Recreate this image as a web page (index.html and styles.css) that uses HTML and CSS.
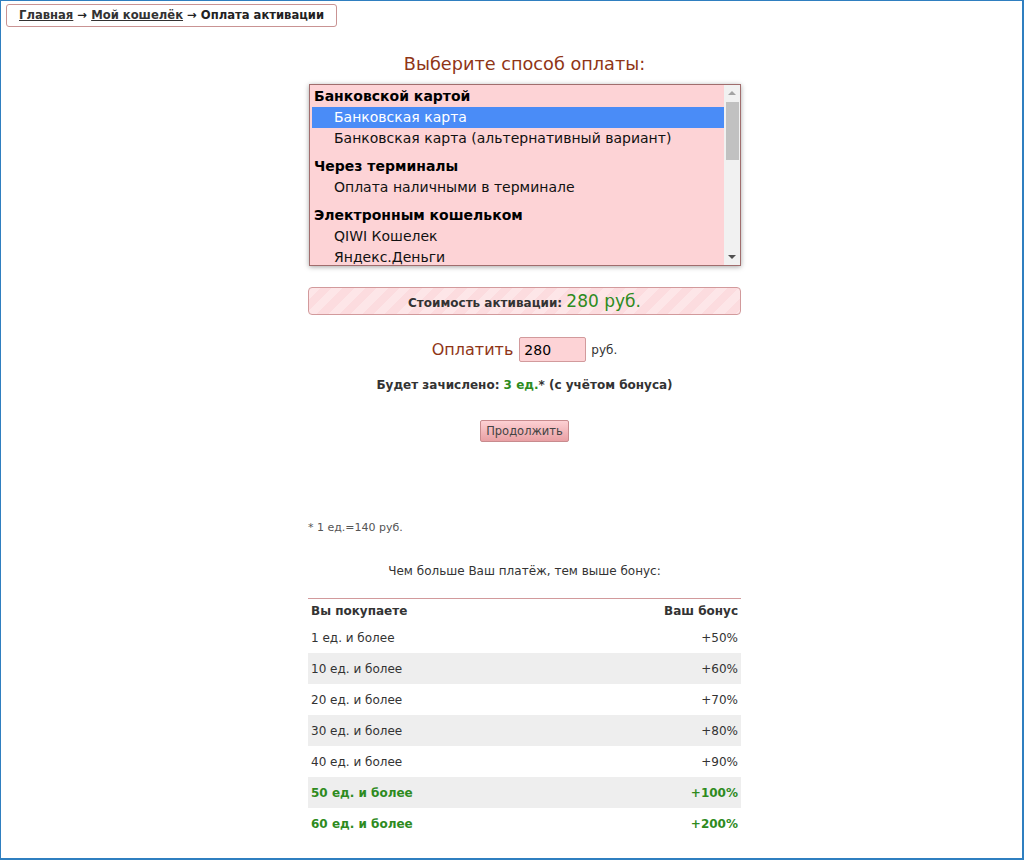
FILE: index.html
```html
<!DOCTYPE html>
<html lang="ru">
<head>
<meta charset="UTF-8">
<title>Оплата активации</title>
<link rel="stylesheet" href="styles.css">
</head>
<body>
<div class="frame">
    <div class="crumbs">
        <a href="#">Главная</a> &rarr; <a href="#">Мой кошелёк</a> &rarr; Оплата активации
    </div>

    <div class="main">
        <div class="column">
            <h2 class="title">Выберите способ оплаты:</h2>

            <div class="listbox">
                <div class="items">
                    <div class="group">Банковской картой</div>
                    <div class="option selected">Банковская карта</div>
                    <div class="option">Банковская карта (альтернативный вариант)</div>
                    <div class="group">Через терминалы</div>
                    <div class="option">Оплата наличными в терминале</div>
                    <div class="group">Электронным кошельком</div>
                    <div class="option">QIWI Кошелек</div>
                    <div class="option">Яндекс.Деньги</div>
                </div>
                <div class="scrollbar">
                    <div class="sb-btn"><span class="tri-up"></span></div>
                    <div class="sb-thumb"></div>
                    <div class="sb-track"></div>
                    <div class="sb-btn"><span class="tri-down"></span></div>
                </div>
            </div>

            <div class="price">
                Стоимость активации: <span class="price-value">280 руб.</span>
            </div>

            <div class="pay">
                <span class="pay-label">Оплатить</span>
                <input type="text" class="pay-input" value="280">
                <span class="pay-unit">руб.</span>
            </div>

            <div class="credit">Будет зачислено: <span class="green">3 ед.</span>* (с учётом бонуса)</div>

            <div class="actions">
                <button class="btn">Продолжить</button>
            </div>

            <div class="note">* 1 ед.=140 руб.</div>

            <div class="bonus-title">Чем больше Ваш платёж, тем выше бонус:</div>

            <table class="bonus">
                <thead>
                    <tr>
                        <th>Вы покупаете</th>
                        <th class="r">Ваш бонус</th>
                    </tr>
                </thead>
                <tbody>
                    <tr><td>1 ед. и более</td><td class="r">+50%</td></tr>
                    <tr><td>10 ед. и более</td><td class="r">+60%</td></tr>
                    <tr><td>20 ед. и более</td><td class="r">+70%</td></tr>
                    <tr><td>30 ед. и более</td><td class="r">+80%</td></tr>
                    <tr><td>40 ед. и более</td><td class="r">+90%</td></tr>
                    <tr class="best"><td>50 ед. и более</td><td class="r">+100%</td></tr>
                    <tr class="best"><td>60 ед. и более</td><td class="r">+200%</td></tr>
                </tbody>
            </table>
        </div>
    </div>
</div>
</body>
</html>
```

FILE: styles.css
```css
html, body {
    margin: 0;
    padding: 0;
    background: #fff;
}
body {
    font-family: 'DejaVu Sans', Verdana, sans-serif;
    font-size: 12px;
    color: #333;
}
.frame {
    box-sizing: border-box;
    width: 1024px;
    height: 860px;
    border: 1px solid #2f7fc0;
    border-right-width: 2px;
    border-bottom-width: 2px;
    padding-top: 3px;
    overflow: hidden;
}
.crumbs {
    display: inline-block;
    margin-left: 5px;
    padding: 3px 12px 3px 12px;
    line-height: 15px;
    font-size: 11.6px;
    border: 1px solid #c99393;
    border-radius: 3px;
    font-weight: bold;
    color: #222;
}
.crumbs a {
    color: #333;
}
.main {
    padding-left: 26px;
}
.column {
    width: 433px;
    margin: 0 auto;
}
.title {
    margin: 26px 0 0;
    font-size: 17.7px;
    line-height: 22px;
    font-weight: normal;
    text-align: center;
    color: #8f3516;
}

/* список способов оплаты */
.listbox {
    box-sizing: border-box;
    display: flex;
    margin: 9px 0 0 1px;
    width: 432px;
    height: 182px;
    background: #fdd3d6;
    border: 1px solid #a06d6d;
    box-shadow: 0 1px 5px rgba(0, 0, 0, 0.35);
    font-size: 14px;
    color: #111;
}
.items {
    flex: 1;
    overflow: hidden;
    padding: 1px 0 0 2px;
}
.group {
    line-height: 21px;
    padding-left: 2px;
    font-weight: bold;
    color: #000;
}
.option + .group {
    margin-top: 7px;
}
.option {
    line-height: 21px;
    padding-left: 22px;
    white-space: nowrap;
}
.option.selected {
    background: #4a8cf7;
    color: #fff;
}
.scrollbar {
    width: 16px;
    display: flex;
    flex-direction: column;
    align-items: center;
    background: #f1f1f1;
}
.sb-btn {
    height: 16px;
    width: 16px;
    display: flex;
    align-items: center;
    justify-content: center;
}
.sb-thumb {
    width: 13px;
    height: 58px;
    margin-top: 1px;
    background: #c1c1c1;
}
.sb-track {
    flex: 1;
}
.tri-up,
.tri-down {
    width: 0;
    height: 0;
    border-left: 4px solid transparent;
    border-right: 4px solid transparent;
}
.tri-up {
    border-bottom: 4px solid #a3a3a3;
}
.tri-down {
    border-top: 4px solid #505050;
}

.price {
    box-sizing: border-box;
    margin-top: 21px;
    height: 28px;
    line-height: 26px;
    text-align: center;
    font-weight: bold;
    border: 1px solid #d29a9c;
    border-radius: 4px;
    background: repeating-linear-gradient(135deg, #fde6e8 0 8px, #fcdcdf 8px 16px);
}
.price-value {
    font-size: 17px;
    font-weight: normal;
    color: #2e8b1e;
}
.pay {
    margin-top: 22px;
    height: 25px;
    display: flex;
    align-items: center;
    justify-content: center;
}
.pay-label {
    font-size: 16px;
    color: #8f3516;
}
.pay-input {
    box-sizing: border-box;
    width: 67px;
    height: 25px;
    margin: 0 5px 0 6px;
    padding: 0 4px;
    font-family: inherit;
    font-size: 14px;
    color: #000;
    background: #fdd3d6;
    border: 1px solid #d29a9c;
    border-radius: 2px;
}
.pay-unit {
    font-size: 12px;
}
.credit {
    margin-top: 15px;
    line-height: 16px;
    text-align: center;
    font-weight: bold;
}
.green {
    color: #2e8b1e;
}
.actions {
    margin-top: 27px;
    text-align: center;
}
.btn {
    box-sizing: border-box;
    height: 22px;
    padding: 0 5px;
    font-family: inherit;
    font-size: 11.5px;
    color: #444;
    background: linear-gradient(#fdd0d3, #e9a0a4);
    border: 1px solid #c88b8e;
    border-radius: 2px;
    cursor: pointer;
}
.note {
    margin-top: 79px;
    line-height: 14px;
    font-size: 11px;
    color: #555;
}
.bonus-title {
    margin-top: 28px;
    line-height: 16px;
    text-align: center;
}
.bonus {
    margin-top: 19px;
    width: 100%;
    border-collapse: collapse;
    border-top: 1px solid #d29a9c;
}
.bonus th,
.bonus td {
    padding: 0 3px;
    text-align: left;
}
.bonus th {
    height: 23px;
    font-weight: bold;
}
.bonus td {
    height: 31px;
}
.bonus .r {
    text-align: right;
}
.bonus tbody tr:nth-child(even) {
    background: #eeeeee;
}
.bonus tr.best td {
    font-weight: bold;
    color: #2e8b1e;
}
```
